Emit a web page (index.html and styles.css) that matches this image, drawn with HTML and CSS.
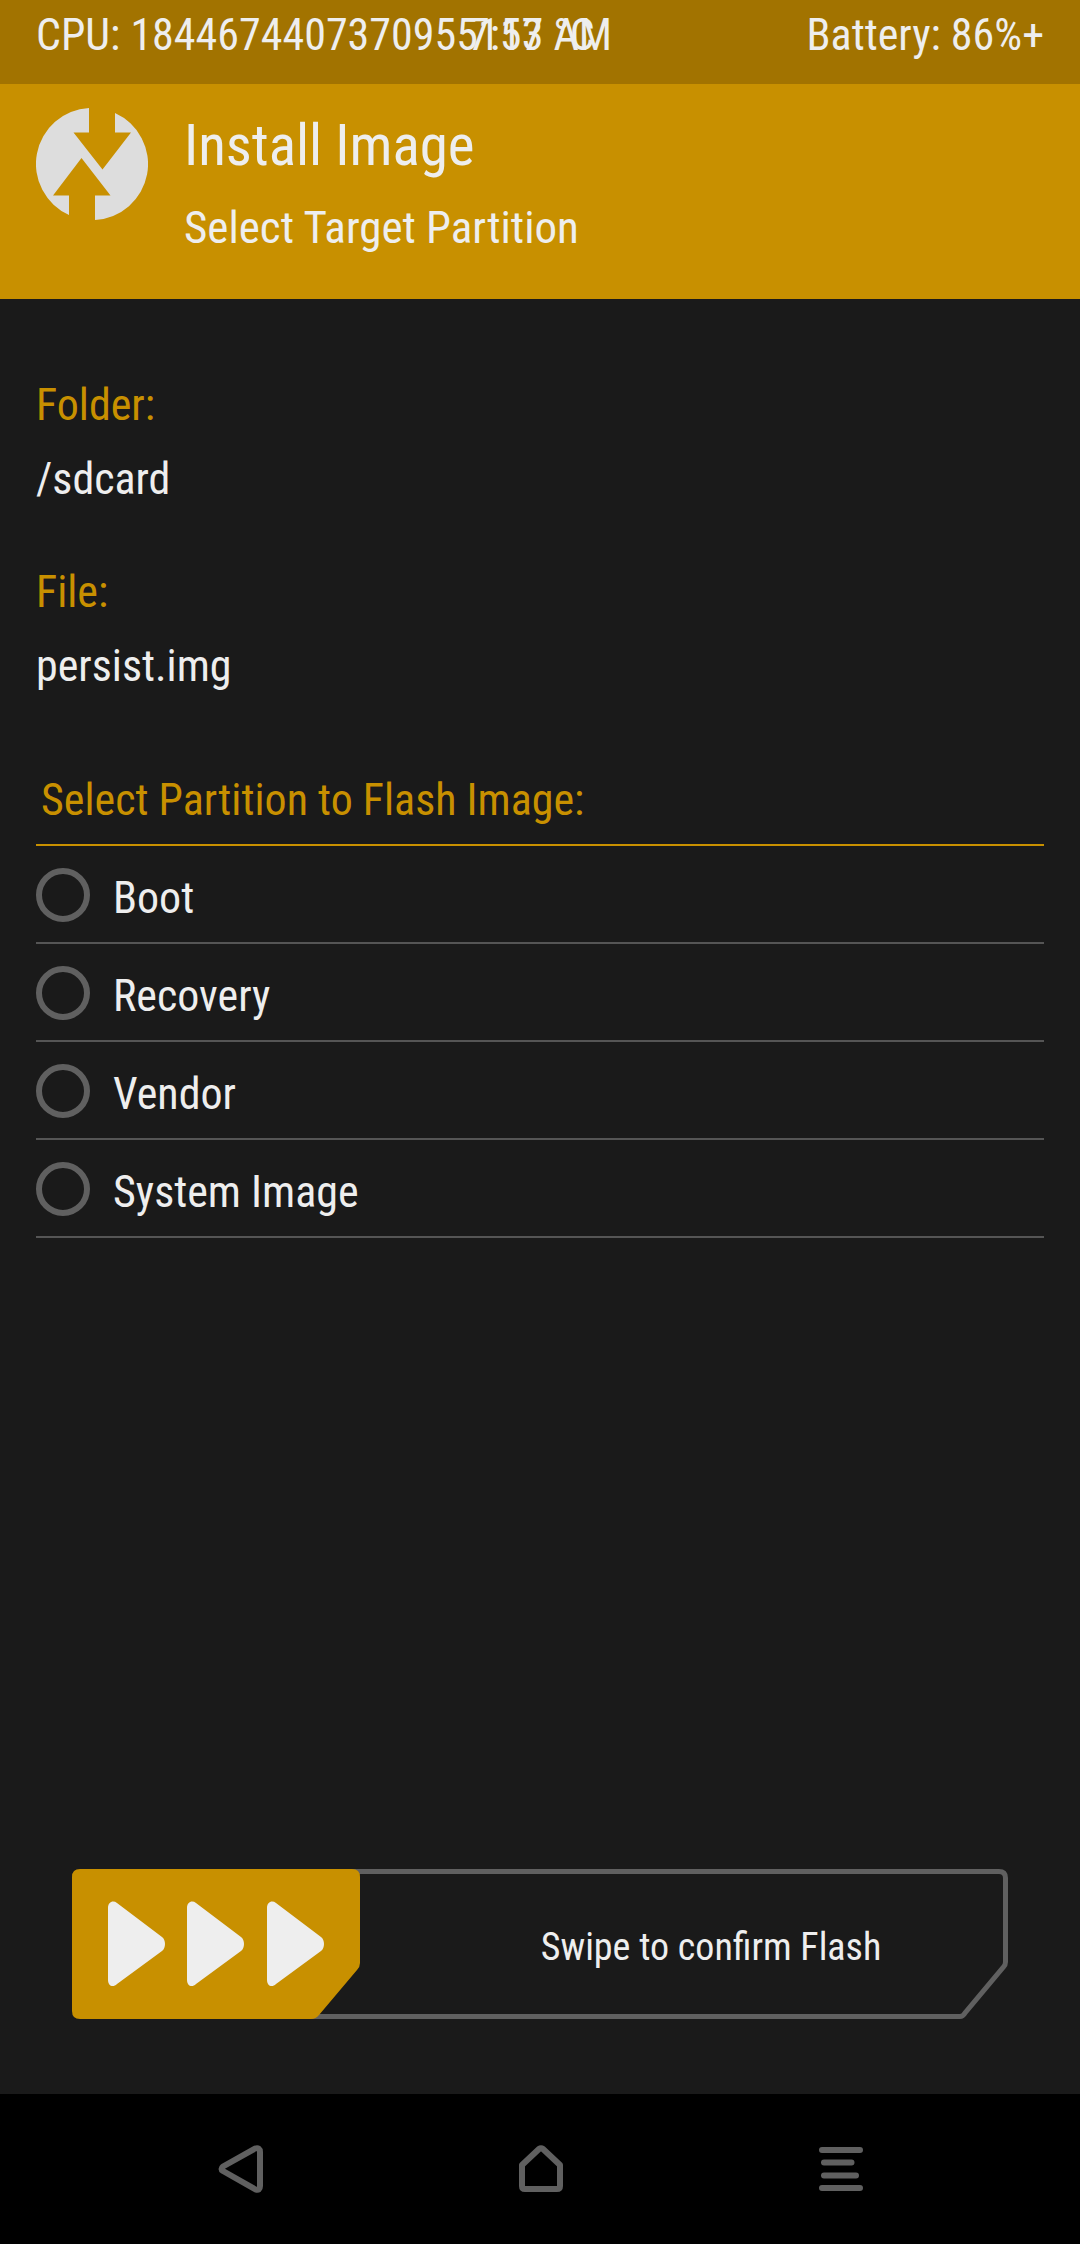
FILE: index.html
```
<!DOCTYPE html>
<html lang="en">
<head>
    <meta charset="UTF-8">
    <meta name="viewport" content="width=device-width, initial-scale=1.0">
    <title>Install Image</title>
    <link rel="stylesheet" href="styles.css">
</head>
<body>
    <div class="status-bar">
        <span class="cpu">CPU: 1844674407370955157 °C</span>
        <span class="clock">7:13 AM</span>
        <span class="battery">Battery: 86%+</span>
    </div>

    <header class="header">
        <svg class="logo" viewBox="0 0 112 112" aria-hidden="true">
            <path fill="#dddddd" d="M53 0V24.500H37.500L66.500 61.500L95 24.500H79V5A56 56 0 0 1 59 112V87.500H74.500L45.500 50L17 87.500H33V107A56 56 0 0 1 53 0Z"/>
        </svg>
        <div class="titles">
            <h1>Install Image</h1>
            <p>Select Target Partition</p>
        </div>
    </header>

    <main class="content">
        <dl class="info">
            <div>
                <dt>Folder:</dt>
                <dd>/sdcard</dd>
            </div>
            <div>
                <dt>File:</dt>
                <dd>persist.img</dd>
            </div>
        </dl>

        <fieldset class="partitions">
            <legend>Select Partition to Flash Image:</legend>
            <label><input type="radio" name="partition" value="boot"><span>Boot</span></label>
            <label><input type="radio" name="partition" value="recovery"><span>Recovery</span></label>
            <label><input type="radio" name="partition" value="vendor"><span>Vendor</span></label>
            <label><input type="radio" name="partition" value="system"><span>System Image</span></label>
        </fieldset>

        <button class="swipe" type="button">
            <svg class="thumb" viewBox="0 0 288 150" aria-hidden="true">
                <path fill="#c89000" d="M8 0H280Q288 0 288 8V94Q288 98 285 101L247 146Q244 150 239 150H8Q0 150 0 142V8Q0 0 8 0Z"/>
                <g fill="#eeeeee">
                    <path id="arrow" d="M36 39C36 33 41 31 45 34L90 68C94 71 94 79 90 82L45 115C41 119 36 117 36 111Z"/>
                    <use href="#arrow" x="79"/>
                    <use href="#arrow" x="159"/>
                </g>
            </svg>
            <span class="swipe-text">Swipe to confirm Flash</span>
            <svg class="corner" viewBox="0 0 60 150" aria-hidden="true">
                <path fill="none" stroke="#606060" stroke-width="5" d="M0 2.500H51Q57.500 2.500 57.500 9V93Q57.500 96 55.500 98L17 144Q15 147.500 12 147.500H0"/>
            </svg>
        </button>
    </main>

    <nav class="nav-bar">
        <button type="button" aria-label="Back">
            <svg viewBox="0 0 48 48"><path d="M39 3.500Q44 2 44 7V41Q44 46 39.500 44.500L7 26Q4 24 7 21.500Z"/></svg>
        </button>
        <button type="button" aria-label="Home">
            <svg viewBox="0 0 48 48"><path d="M6 20V41Q6 44 9 44H41Q44 44 44 41V20L27 4Q25 2.500 23 4Z"/></svg>
        </button>
        <button type="button" aria-label="Log">
            <svg viewBox="0 0 48 48"><path d="M6 5H44M8 17.500H35.500M8 30.500H40M6 43H44"/></svg>
        </button>
    </nav>
</body>
</html>
```
FILE: styles.css
```
* {
    box-sizing: border-box;
}
body {
    margin: 0;
    min-height: 100vh;
    display: flex;
    flex-direction: column;
    background: #1a1a1a;
    color: #eeeeee;
    font-family: "Roboto Condensed", Roboto, sans-serif;
    font-size: 44px;
    line-height: 56px;
}
h1, p, dl, dd {
    margin: 0;
}
button {
    border: 0;
    padding: 0;
    background: none;
    color: inherit;
    font: inherit;
}

/* Status bar */
.status-bar {
    position: relative;
    display: flex;
    justify-content: space-between;
    padding: 7px 36px 21px;
    background: #a27300;
    white-space: nowrap;
}
/* clock stays centered, even over a long cpu reading */
.clock {
    position: absolute;
    left: 0;
    right: 0;
    text-align: center;
}

/* Header */
.header {
    display: flex;
    gap: 36px;
    padding: 24px 36px 43px;
    background: #c89000;
}
.logo {
    width: 112px;
    height: 112px;
}
.titles {
    display: flex;
    flex-direction: column;
    gap: 18px;
    padding-top: 2px;
}
h1 {
    font-size: 57px;
    line-height: 72px;
    font-weight: 400;
}
.titles p {
    font-size: 45px;
}

/* Content */
.content {
    flex: 1;
    display: flex;
    flex-direction: column;
    padding: 78px 36px 75px;
}
.info {
    display: flex;
    flex-direction: column;
    gap: 57px;
    margin-bottom: 78px;
}
.info div {
    display: flex;
    flex-direction: column;
    gap: 18px;
}
.info dt,
.partitions legend {
    color: #c89000;
}
.partitions {
    border: 0;
    margin: 0;
    padding: 0;
}
.partitions legend {
    width: 100%;
    padding: 0 5px 16px;
    border-bottom: 2px solid #c89000;
}
.partitions label {
    display: flex;
    align-items: center;
    gap: 23px;
    height: 98px;
    padding-top: 2px;
    border-bottom: 2px solid #555555;
}
.partitions span {
    padding-top: 6px;
}
.partitions input {
    appearance: none;
    width: 54px;
    height: 54px;
    margin: 0;
    border: 6px solid #606060;
    border-radius: 50%;
}
.partitions input:checked {
    background: radial-gradient(#c89000 50%, transparent 52%);
}

/* Swipe slider, the outline runs from behind the thumb to the cut corner */
.swipe {
    display: flex;
    height: 150px;
    margin: auto 36px 0;
    font-size: 38px;
    background: linear-gradient(#606060, #606060) right 60px top / calc(100% - 120px) 5px no-repeat,
                linear-gradient(#606060, #606060) right 60px bottom / calc(100% - 120px) 5px no-repeat;
}
.thumb {
    width: 288px;
    height: 150px;
}
.swipe-text {
    flex: 1;
    align-self: center;
    padding: 6px 0 0 114px;
}
.corner {
    width: 60px;
    height: 150px;
}

/* Navigation */
.nav-bar {
    display: flex;
    justify-content: space-around;
    padding: 0 90px;
    height: 150px;
    background: #000000;
}
.nav-bar button {
    flex: 1;
}
.nav-bar svg {
    display: block;
    margin: 0 auto;
    width: 48px;
    height: 48px;
    fill: none;
    stroke: #606060;
    stroke-width: 6;
    stroke-linecap: round;
    stroke-linejoin: round;
}
```
